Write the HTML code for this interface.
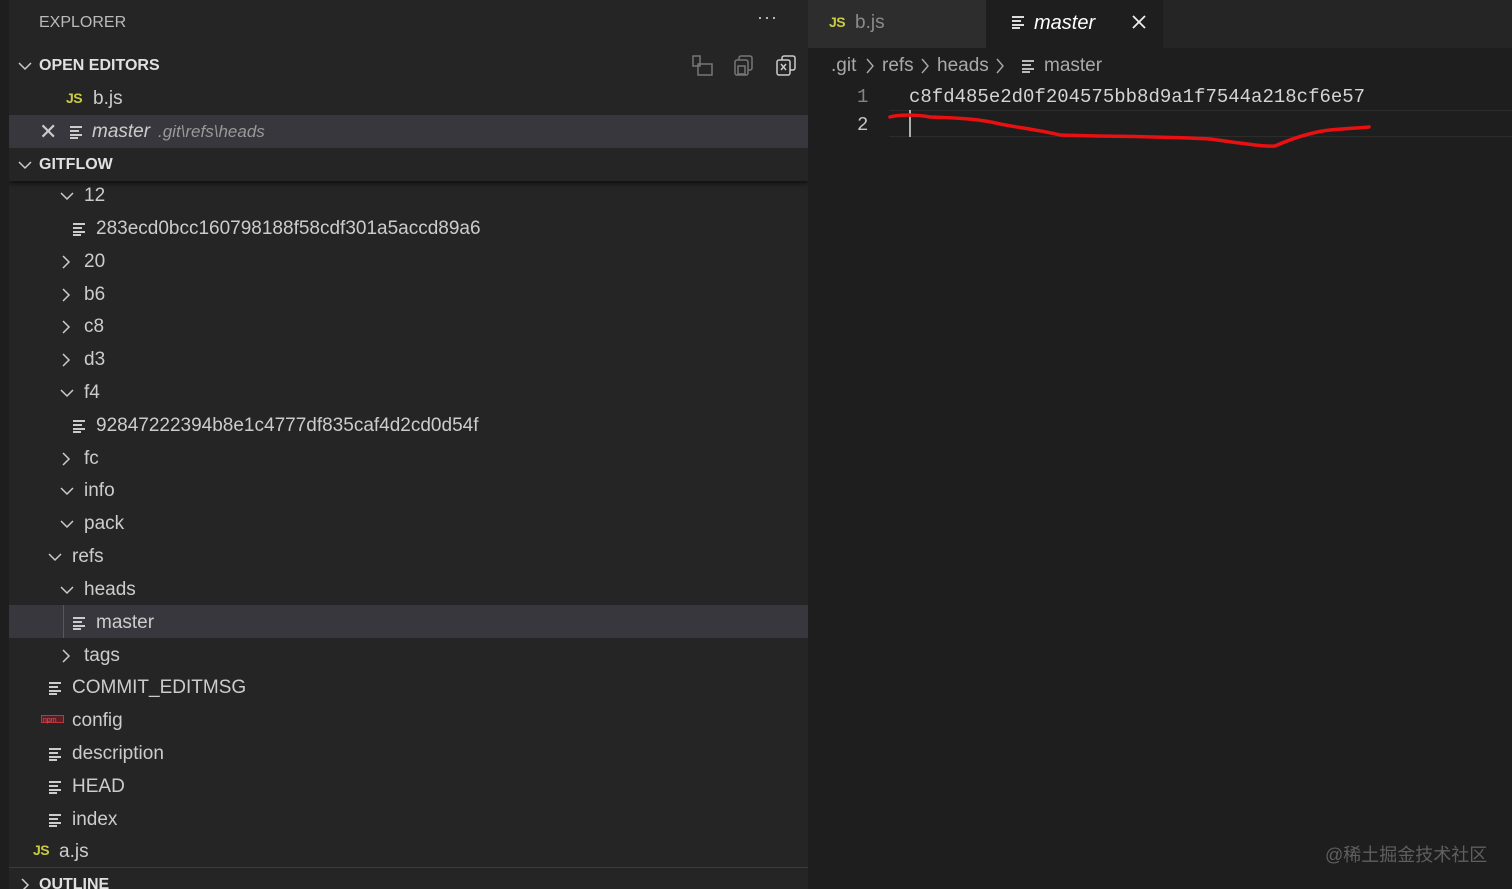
<!DOCTYPE html>
<html><head><meta charset="utf-8"><style>
*{margin:0;padding:0;box-sizing:border-box}
html,body{width:1512px;height:889px;overflow:hidden}
body{background:#1e1e1e;font-family:"Liberation Sans","Noto Sans CJK SC",sans-serif;color:#cccccc;position:relative}
.side{position:absolute;left:9px;top:0;width:799px;height:889px;background:#252526;overflow:hidden}
.act{position:absolute;left:0;top:0;width:9px;height:889px;background:#1e1e1e}
.r{position:absolute;left:0;width:799px;height:33px;line-height:33px;font-size:19px;color:#cccccc;white-space:nowrap}
.r span,.r svg{position:absolute}
.hdr{font-weight:bold;font-size:16px;color:#e0e0e0}
.js{font-weight:bold;font-size:14px;color:#cbcb41;letter-spacing:-.5px}
.mono{font-family:"Liberation Mono",monospace;font-size:19px}
.bc{position:absolute;top:55px;font-size:19px;color:#a9a9a9;white-space:nowrap}
</style></head><body>
<div class="act"></div>
<div class="side">
 <div class="r" style="top:6px"><span style="left:30px;font-size:16px;color:#bbb">EXPLORER</span><span style="left:748px;top:-5px;font-size:18px;letter-spacing:1px">···</span></div>
 <div class="r" style="top:49px"><svg style="left:8px;top:10px" width="16" height="14"><polyline points="2,4 8,10 14,4" fill="none" stroke="#ccc" stroke-width="1.5"/></svg><span class="hdr" style="left:30px">OPEN EDITORS</span>
  <svg style="left:682px;top:5px" width="24" height="24" fill="none" stroke="#777" stroke-width="1.5"><rect x="2" y="2" width="7" height="10"/><rect x="7" y="10" width="14" height="11"/></svg>
  <svg style="left:724px;top:5px" width="24" height="24" fill="none" stroke="#777" stroke-width="1.5"><rect x="6" y="2" width="13" height="14" rx="2"/><rect x="2" y="6" width="13" height="15" rx="2" fill="#252526"/><rect x="5" y="12" width="7" height="8"/></svg>
  <svg style="left:766px;top:5px" width="24" height="24" fill="none" stroke="#ccc" stroke-width="1.5"><rect x="7" y="2" width="13" height="14" rx="2"/><rect x="2" y="6" width="13" height="15" rx="2" fill="#252526"/><path d="M6 10l5 6M11 10l-5 6"/></svg>
 </div>
 <div class="r" style="top:82px"><span class="js" style="left:57px">JS</span><span style="left:84px">b.js</span></div>
 <div class="r" style="top:115px;background:#37373d"><span style="left:30px;font-size:22px;color:#ccc">✕</span><svg style="left:61px;top:10px" width="14" height="14" fill="#ccc"><rect x="0" y="1" width="12" height="2"/><rect x="0" y="5" width="9" height="2"/><rect x="0" y="9" width="12" height="2"/><rect x="0" y="12" width="8" height="2"/></svg><span style="left:83px;font-style:italic">master</span><span style="left:149px;font-style:italic;font-size:17px;color:#999">.git\refs\heads</span></div>
 <div style="position:absolute;left:0;top:148px;width:799px;height:1px;background:#3c3c3c"></div>
 <div class="r" style="top:148px;box-shadow:0 3px 4px rgba(0,0,0,.5);background:#252526;z-index:2"><svg style="left:8px;top:10px" width="16" height="14"><polyline points="2,4 8,10 14,4" fill="none" stroke="#ccc" stroke-width="1.5"/></svg><span class="hdr" style="left:30px">GITFLOW</span></div>
 <div style="position:absolute;left:0;top:605px;width:799px;height:33px;background:#37373d"></div>
 <div style="position:absolute;left:54px;top:605px;width:1px;height:33px;background:#585858"></div>
 <div id="tree"></div>
 <div style="position:absolute;left:0;top:867px;width:799px;height:1px;background:#3c3c3c"></div>
 <div class="r" style="top:867px"><svg style="left:8px;top:10px" width="16" height="16"><polyline points="5,2 11,8 5,14" fill="none" stroke="#ccc" stroke-width="1.5"/></svg><span class="hdr" style="left:30px;top:1px">OUTLINE</span></div>
</div>
<div style="position:absolute;left:808px;top:0;width:704px;height:48px;background:#252526"></div>
<div style="position:absolute;left:808px;top:0;width:178px;height:48px;background:#2d2d2d"></div>
<div style="position:absolute;left:986px;top:0;width:177px;height:48px;background:#1e1e1e"></div>
<span class="js" style="position:absolute;left:829px;top:14px">JS</span>
<span style="position:absolute;left:855px;top:12px;font-size:19px;color:#8b8b8b">b.js</span>
<svg style="position:absolute;left:1012px;top:15px" width="14" height="14" fill="#ddd"><rect x="0" y="1" width="12" height="2"/><rect x="0" y="5" width="9" height="2"/><rect x="0" y="9" width="12" height="2"/><rect x="0" y="12" width="8" height="2"/></svg>
<span style="position:absolute;left:1034px;top:12px;font-size:20px;font-style:italic;color:#fff">master</span>
<svg style="position:absolute;left:1131px;top:14px" width="16" height="16"><path d="M2 2L14 14M14 2L2 14" stroke="#eee" stroke-width="1.8"/></svg>
<span class="bc" style="left:831px">.git</span>
<svg style="position:absolute;left:864px;top:57px" width="12" height="18"><polyline points="3,2 9,9 3,16" fill="none" stroke="#a9a9a9" stroke-width="1.4"/></svg>
<span class="bc" style="left:882px">refs</span>
<svg style="position:absolute;left:919px;top:57px" width="12" height="18"><polyline points="3,2 9,9 3,16" fill="none" stroke="#a9a9a9" stroke-width="1.4"/></svg>
<span class="bc" style="left:937px">heads</span>
<svg style="position:absolute;left:994px;top:57px" width="12" height="18"><polyline points="3,2 9,9 3,16" fill="none" stroke="#a9a9a9" stroke-width="1.4"/></svg>
<svg style="position:absolute;left:1022px;top:59px" width="14" height="14" fill="#bbb"><rect x="0" y="1" width="12" height="2"/><rect x="0" y="5" width="9" height="2"/><rect x="0" y="9" width="12" height="2"/><rect x="0" y="12" width="8" height="2"/></svg>
<span class="bc" style="left:1044px">master</span>
<div style="position:absolute;left:889px;top:110px;width:623px;height:27px;border-top:1px solid #2c2c2c;border-bottom:1px solid #2c2c2c"></div>
<span class="mono" style="position:absolute;left:857px;top:86px;color:#858585">1</span>
<span class="mono" style="position:absolute;left:857px;top:114px;color:#c6c6c6">2</span>
<span class="mono" style="position:absolute;left:909px;top:86px;color:#d4d4d4">c8fd485e2d0f204575bb8d9a1f7544a218cf6e57</span>
<div style="position:absolute;left:909px;top:110px;width:2px;height:27px;background:#aeafad"></div>
<svg style="position:absolute;left:880px;top:105px" width="500" height="50"><path d="M10 12 C20 9 40 10 50 12 C80 13 100 14 120 19 C140 23 160 25 180 30 C240 32 280 31 330 34 C360 38 385 42 395 41 C420 30 440 26 450 25 C470 23 480 23 489 22" fill="none" stroke="#e81010" stroke-width="3.5" stroke-linecap="round"/></svg>
<span style="position:absolute;left:1325px;top:841px;font-size:18px;color:#5f5f5f">@稀土掘金技术社区</span>
<script>
var rows=[
[195,'c',60,'12'],[228,'f',73,'283ecd0bcc160798188f58cdf301a5accd89a6'],[261,'r',60,'20'],[294,'r',60,'b6'],[326,'r',60,'c8'],[359,'r',60,'d3'],[392,'c',60,'f4'],[425,'f',73,'92847222394b8e1c4777df835caf4d2cd0d54f'],[458,'r',60,'fc'],[490,'c',60,'info'],[523,'c',60,'pack'],[556,'c',48,'refs'],[589,'c',60,'heads'],[622,'f',73,'master'],[655,'r',60,'tags'],[687,'f',49,'COMMIT_EDITMSG'],[720,'n',49,'config'],[753,'f',49,'description'],[786,'f',49,'HEAD'],[819,'f',49,'index'],[851,'j',33,'a.js']];
var h='';
rows.forEach(function(r){var top=r[0]-16,x=r[2]-9,ic='',tx;
if(r[1]=='c'){ic='<svg style="left:'+(x-1)+'px;top:10px" width="16" height="14"><polyline points="2,4 8,10 14,4" fill="none" stroke="#ccc" stroke-width="1.5"/></svg>';tx=x+24;}
else if(r[1]=='r'){ic='<svg style="left:'+x+'px;top:9px" width="14" height="16"><polyline points="3,2 9,8 3,14" fill="none" stroke="#ccc" stroke-width="1.5"/></svg>';tx=x+24;}
else if(r[1]=='f'){ic='<svg style="left:'+x+'px;top:10px" width="14" height="14" fill="#ccc"><rect x="0" y="1" width="12" height="2"/><rect x="0" y="5" width="9" height="2"/><rect x="0" y="9" width="12" height="2"/><rect x="0" y="12" width="8" height="2"/></svg>';tx=x+23;}
else if(r[1]=='n'){ic='<svg style="left:'+(x-8)+'px;top:11px" width="24" height="10"><rect x="0.5" y="0.5" width="22" height="7" fill="#5a1f24" stroke="#c1333d"/><text x="2" y="7" font-size="7" fill="#e05561" font-family="Liberation Sans">npm</text></svg>';tx=x+23;}
else {ic='<span class="js" style="left:'+x+'px;top:-1px">JS</span>';tx=x+26;}
h+='<div class="r" style="top:'+top+'px">'+ic+'<span style="left:'+tx+'px">'+r[3]+'</span></div>';});
document.getElementById('tree').innerHTML=h;
</script>
</body></html>
